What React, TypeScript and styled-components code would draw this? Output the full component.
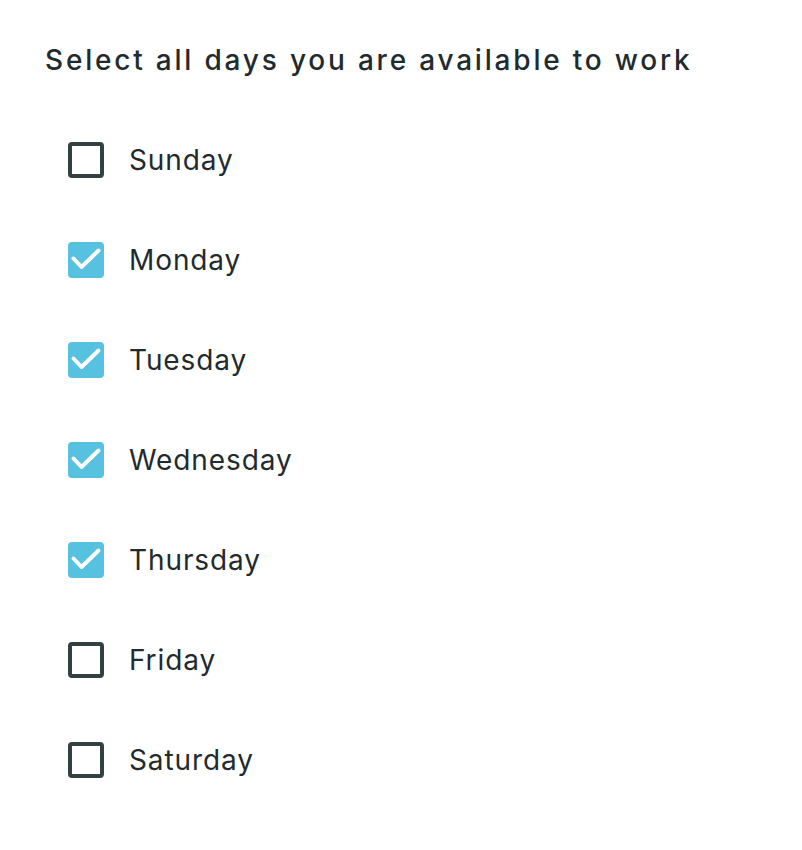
import React, { useState } from "react";
import styled, { createGlobalStyle } from "styled-components";

const GlobalStyle = createGlobalStyle`
  body {
    margin: 0;
    background: #ffffff;
    font-family: Inter, "Noto Sans", sans-serif;
  }
`;

const Page = styled.div`
  padding: 40px 45px;
`;

const Title = styled.h2`
  margin: 0 0 62px;
  font-size: 28px;
  font-weight: 500;
  letter-spacing: 2.8px;
  line-height: 40px;
  color: #1f2b2e;
`;

const List = styled.ul`
  list-style: none;
  margin: 0;
  padding: 0 0 0 23px;
  display: flex;
  flex-direction: column;
  gap: 64px;
`;

const Row = styled.li`
  display: flex;
  align-items: center;
  gap: 25px;
  height: 36px;
  cursor: pointer;
`;

const Box = styled.span<{ $checked: boolean }>`
  width: 36px;
  height: 36px;
  box-sizing: border-box;
  border-radius: 4px;
  display: grid;
  place-items: center;
  background: ${({ $checked }) => ($checked ? "#56c2df" : "transparent")};
  border: ${({ $checked }) => ($checked ? "none" : "4px solid #344143")};
`;

const Label = styled.span`
  font-size: 28px;
  font-weight: 400;
  letter-spacing: 0.9px;
  color: #1f2b2e;
`;

const Check = () => (
  <svg width="36" height="36" viewBox="0 0 36 36">
    <polyline
      points="5.5,16.5 13.5,25 30.5,8.5"
      fill="none"
      stroke="#ffffff"
      strokeWidth="4"
      strokeLinecap="round"
      strokeLinejoin="round"
    />
  </svg>
);

const days = ["Sunday", "Monday", "Tuesday", "Wednesday", "Thursday", "Friday", "Saturday"];

const App = () => {
  const [selected, setSelected] = useState<string[]>(["Monday", "Tuesday", "Wednesday", "Thursday"]);

  const toggle = (day: string) =>
    setSelected((prev) => (prev.includes(day) ? prev.filter((d) => d !== day) : [...prev, day]));

  return (
    <>
      <GlobalStyle />
      <Page>
        <Title>Select all days you are available to work</Title>
        <List>
          {days.map((day) => {
            const checked = selected.includes(day);
            return (
              <Row key={day} onClick={() => toggle(day)}>
                <Box $checked={checked}>{checked && <Check />}</Box>
                <Label>{day}</Label>
              </Row>
            );
          })}
        </List>
      </Page>
    </>
  );
};

export default App;
